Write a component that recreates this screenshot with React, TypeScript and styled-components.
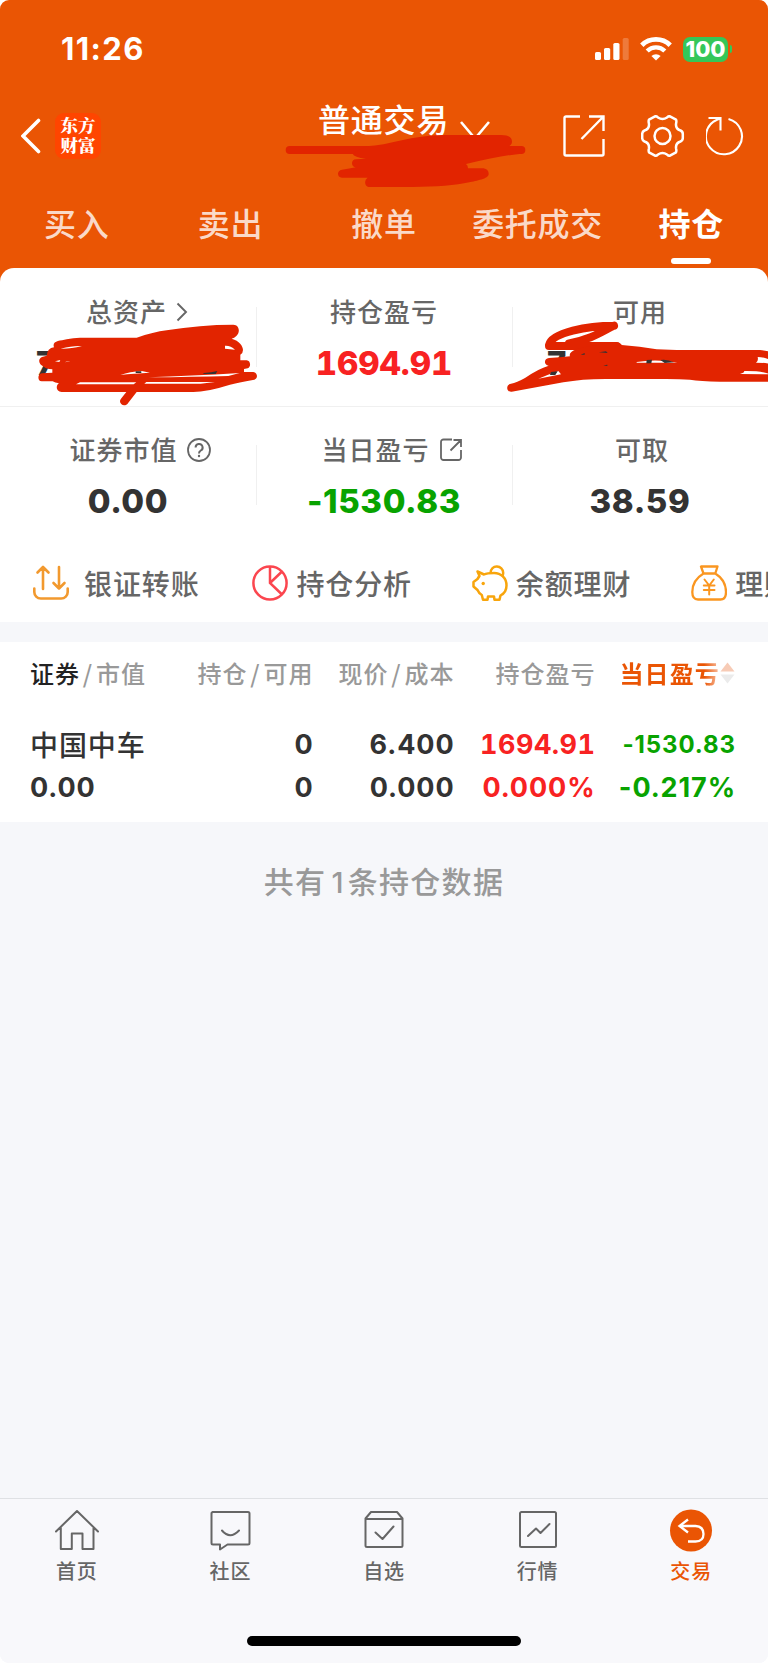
import React from "react";
import styled, { createGlobalStyle } from "styled-components";

const cjk = '"Noto Sans CJK SC", sans-serif';
const num = 'Inter, "Liberation Sans", sans-serif';
const orange = "#ea5504";
const scribbleRed = "#e22400";

const GlobalStyle = createGlobalStyle`
  * { box-sizing: border-box; }
  body { margin: 0; background: #fff; }
`;

const Screen = styled.div`
  position: relative;
  width: 768px;
  height: 1663px;
  display: flex;
  flex-direction: column;
  overflow: hidden;
  border-radius: 9px;
  background: #f6f7fa;
  font-family: ${cjk};
  color: #666;
  white-space: nowrap;
`;

const Header = styled.header`
  height: 282px;
  flex: none;
  background: ${orange};
  color: #fff;
`;

const StatusBar = styled.div`
  display: flex;
  align-items: center;
  justify-content: space-between;
  height: 98px;
  padding: 0 36px 0 61px;
`;

const Clock = styled.span`
  font: 700 31px/36px ${num};
  letter-spacing: 1.4px;
`;

const StatusIcons = styled.div`
  display: flex;
  align-items: center;
  gap: 11px;
`;

const Battery = styled.div`
  display: flex;
  align-items: center;
  gap: 2px;
`;

const BatteryLevel = styled.span`
  width: 45px;
  height: 25px;
  border-radius: 7px;
  background: #34c759;
  font: 800 22px/25px ${num};
  text-align: center;
`;

const BatteryTip = styled.span`
  width: 2px;
  height: 8px;
  border-radius: 0 3px 3px 0;
  background: #34c759;
`;

const NavBar = styled.div`
  display: grid;
  grid-template-columns: 256px 1fr 256px;
  height: 76px;
`;

const NavLeft = styled.div`
  display: flex;
  align-items: center;
  gap: 14px;
  padding-left: 21px;
`;

const Logo = styled.div`
  width: 46px;
  height: 46px;
  padding-top: 2px;
  border-radius: 9px;
  background: #ff4500;
  font: 900 17.5px/20px "Noto Serif CJK SC", ${cjk};
  text-align: center;
`;

const NavTitle = styled.div`
  display: flex;
  align-items: flex-start;
  gap: 11px;
  padding-left: 62px;
  font-size: 32px;
  font-weight: 500;
  line-height: 40px;
  letter-spacing: 0.8px;
  & > svg { margin-top: 23px; }
`;

const NavRight = styled.div`
  display: flex;
  align-items: center;
  padding-left: 51px;
`;

const IconGap = styled.i<{ $w: number }>`
  width: ${(p) => p.$w}px;
`;

const Tabs = styled.nav`
  display: flex;
  height: 108px;
  padding-top: 28px;
`;

const Tab = styled.div<{ $active?: boolean }>`
  flex: 1;
  display: flex;
  flex-direction: column;
  align-items: center;
  gap: 15px;
  font-size: 32px;
  line-height: 41px;
  letter-spacing: 0.7px;
  font-weight: ${(p) => (p.$active ? 700 : 500)};
  color: ${(p) => (p.$active ? "#fff" : "rgba(255,255,255,.8)")};
`;

const TabMarker = styled.span`
  width: 40px;
  height: 6px;
  border-radius: 3px;
  background: #fff;
`;

const Sheet = styled.section`
  flex: none;
  height: 354px;
  margin-top: -14px;
  border-radius: 14px 14px 0 0;
  background: #fff;
`;

const StatRow = styled.div<{ $line?: boolean }>`
  display: flex;
  height: ${(p) => (p.$line ? 139 : 134)}px;
  padding-top: ${(p) => (p.$line ? 25 : 24)}px;
  border-bottom: ${(p) => (p.$line ? "1px solid #f0f0f0" : "none")};
`;

const Stat = styled.div`
  flex: 1;
  display: flex;
  flex-direction: column;
  align-items: center;
`;

const StatDivider = styled.i`
  width: 1px;
  height: 60px;
  margin: 14px -1px 0 0;
  background: #f0f0f0;
`;

const StatLabel = styled.div<{ $indent?: number; $gap?: number }>`
  display: flex;
  align-items: center;
  gap: ${(p) => p.$gap || 9}px;
  height: 36px;
  padding-left: ${(p) => p.$indent || 0}px;
  font-size: 26px;
  font-weight: 500;
  line-height: 36px;
  letter-spacing: 1px;
  & > svg { margin-top: 1px; }
`;

const StatValue = styled.div<{ $color?: string; $tabular?: boolean }>`
  height: 40px;
  margin-top: 14px;
  font: 800 33px/40px ${num};
  font-variant-numeric: ${(p) => (p.$tabular ? "tabular-nums" : "normal")};
  letter-spacing: ${(p) => (p.$tabular ? 0 : 0.6)}px;
  color: ${(p) => p.$color || "#333"};
`;

const HiddenValue = styled(StatValue)<{ $left: number }>`
  align-self: flex-start;
  margin-left: ${(p) => p.$left}px;
`;

const Actions = styled.div`
  display: flex;
  height: 81px;
  padding: 23px 0 0 33px;
  overflow: hidden;
`;

const Action = styled.div<{ $gap: number }>`
  flex: 0 0 219.4px;
  display: flex;
  align-items: center;
  gap: ${(p) => p.$gap}px;
  height: 38px;
  font-size: 28px;
  font-weight: 500;
  line-height: 37px;
  letter-spacing: 0.9px;
  & > svg { flex: none; }
`;

const Holdings = styled.section`
  flex: none;
  height: 180px;
  margin-top: 20px;
  padding: 14px 32px 0 30px;
  background: #fff;
`;

const HoldingsHead = styled.div`
  display: grid;
  grid-template-columns: 142.5px 141px 141px 141px 1fr;
  height: 34px;
  font-size: 24px;
  font-weight: 500;
  line-height: 34px;
  letter-spacing: 1px;
  color: #999;
`;

const HeadCell = styled.div<{ $align?: string }>`
  text-align: ${(p) => p.$align || "right"};
  & > b { font-weight: 500; color: #222; }
  & > span { margin: 0 2.8px; font-weight: 500; }
`;

const SortedCell = styled.div`
  display: flex;
  align-items: center;
  padding-left: 24px;
  & > span {
    letter-spacing: 1.1px;
    font-weight: 700;
    background: linear-gradient(90deg, ${orange} 84%, #f8c3a8 100%);
    background-clip: text;
    -webkit-background-clip: text;
    color: transparent;
  }
`;

const HoldingRow = styled.div<{ $top: number }>`
  display: grid;
  grid-template-columns: 142.5px 141px 141px 141px 1fr;
  height: 34px;
  margin-top: ${(p) => p.$top}px;
  font: 700 27px/34px ${num};
  letter-spacing: 0.9px;
  color: #333;
`;

const Cell = styled.div<{ $color?: string; $size?: number; $tabular?: boolean }>`
  text-align: right;
  color: ${(p) => p.$color || "inherit"};
  font-size: ${(p) => p.$size || 27}px;
  font-variant-numeric: ${(p) => (p.$tabular ? "tabular-nums" : "normal")};
  letter-spacing: ${(p) => (p.$tabular ? "0.5px" : "inherit")};
`;

const NameCell = styled.div`
  margin-top: -1px;
  font: 500 28px/34px ${cjk};
  letter-spacing: 0.9px;
`;

const LeftCell = styled.div`
  text-align: left;
`;

const Summary = styled.p`
  flex: 1;
  margin: 37px 0 0;
  font-size: 30px;
  font-weight: 500;
  line-height: 42px;
  letter-spacing: 1.3px;
  text-align: center;
  color: #999;
  & > span { font: 500 29px/42px ${num}; margin: 0 3px 0 5px; }
`;

const BottomBar = styled.footer`
  flex: none;
  display: flex;
  flex-direction: column;
  align-items: center;
  justify-content: space-between;
  height: 165px;
  padding-bottom: 17px;
  border-top: 1px solid #dfe1e4;
  background: #f8f8fb;
`;

const BottomTabs = styled.div`
  display: flex;
  width: 100%;
`;

const BottomTab = styled.div<{ $active?: boolean }>`
  flex: 1;
  display: flex;
  flex-direction: column;
  align-items: center;
  padding-top: 9.5px;
  font-size: 20px;
  font-weight: 500;
  line-height: 28px;
  letter-spacing: 0.8px;
  color: ${(p) => (p.$active ? orange : "#666")};
  & > svg { margin-bottom: 4.5px; }
`;

const HomeIndicator = styled.div`
  width: 274px;
  height: 10px;
  border-radius: 5px;
  background: #000;
`;

const ScribbleLayer = styled.svg`
  position: absolute;
  top: 0;
  left: 0;
  pointer-events: none;
`;

const Signal = () => (
  <svg width="34" height="24" viewBox="0 0 34 24" fill="#fff">
    <rect x="0" y="15" width="6" height="8" rx="1.6" />
    <rect x="9" y="11" width="6.2" height="12" rx="1.6" />
    <rect x="18.3" y="6" width="6.2" height="17" rx="1.6" />
    <rect x="27.7" y="1" width="6" height="22" rx="1.6" opacity=".22" />
  </svg>
);

const Wifi = () => (
  <svg width="32" height="24" viewBox="0 0 32 24" fill="none" stroke="#fff">
    <path d="M1.8 8.2a20.3 20.3 0 0 1 28.4 0" strokeWidth="4.8" />
    <path d="M7.2 14a12.5 12.5 0 0 1 17.6 0" strokeWidth="4.4" />
    <path d="M16 23.6 11.4 19a6.6 6.6 0 0 1 9.2 0Z" fill="#fff" stroke="none" />
  </svg>
);

const ShareOut = () => (
  <svg width="42" height="42" viewBox="0 0 42 42" fill="none" stroke="#fff" strokeWidth="2.4">
    <path d="M17 1.5H3A1.5 1.5 0 0 0 1.5 3v36A1.5 1.5 0 0 0 3 40.500h36a1.500 1.500 0 0 0 1.500-1.500V24M26 1.500h14.500V16M40 2 18.500 24" />
  </svg>
);

const Gear = () => (
  <svg width="44" height="42" viewBox="0 0 44 42" fill="none" stroke="#fff" strokeWidth="2.500" strokeLinejoin="round">
    <circle cx="21.500" cy="21" r="8" />
    <path d="M14.500 1.200 8 4.700Q7.300 6 7.900 8.500C8.500 12.500 6.500 14.600 3.500 15.500Q1.200 16.500 1.200 19V23Q1.200 25.500 3.500 26.500C6.500 27.400 8.500 29.500 7.900 33.500Q7.300 36 8 37.300L14.500 40.800Q16 40.800 17 39.500Q21.500 36.700 26 39.500Q27 40.800 28.500 40.800L35 37.300Q35.700 36 35.100 33.500C34.500 29.500 36.500 27.400 39.500 26.500Q41.800 25.500 41.800 23V19Q41.800 16.500 39.500 15.500C36.500 14.600 34.500 12.500 35.100 8.500Q35.700 6 35 4.700L28.500 1.200Q27 1.200 26 2.500Q21.500 5.300 17 2.500Q16 1.200 14.500 1.200Z" />
  </svg>
);

const Reload = () => (
  <svg width="40" height="40" viewBox="0 0 40 40" fill="none" stroke="#fff" strokeWidth="2.100">
    <path d="M22.500 2.900A18 18 0 1 1 11 3.700L14.500 2.300M2.500 2H14.500V14.500" />
  </svg>
);

const Transfer = () => (
  <svg width="36" height="36" viewBox="0 0 36 36" fill="none" stroke="#f2992e" strokeWidth="2.600" strokeLinecap="round" strokeLinejoin="round">
    <path d="M1.300 23.500v3.500a6.500 6.500 0 0 0 6.500 6.500h20.400a6.500 6.500 0 0 0 6.500-6.500v-3.500M10 24V2M4.500 7.500 10 2l5.500 5.500M26 2v21.500M20.500 18l5.500 5.500 5.500-5.500" />
  </svg>
);

const Pie = () => (
  <svg width="36" height="36" viewBox="0 0 36 36" fill="none" stroke="#fb464f" strokeWidth="2.500">
    <circle cx="18" cy="18" r="16.600" />
    <path d="M18 1.500V18L30 29.500M18 18 30 6.500" />
  </svg>
);

const Piggy = () => (
  <svg width="36" height="36" viewBox="0 0 36 36" fill="none" stroke="#f8a50c" strokeWidth="2.500" strokeLinejoin="round">
    <path d="M5.500 6.500 12 9.500Q15 8 22 8C29 8 34.500 13 34.500 20.500Q34.500 27.500 28.500 30.500L27.500 34.700H22.500L22 31.500H16L15.500 34.700H11L9.800 30Q7 28.500 5.500 25L1.500 21.500V17L5.500 14Q7 11.500 7.500 11Z" />
    <path d="M18.500 8.500C18.500-1.500 31.500.2 31.200 8Q31.200 10.500 30 11.500" />
    <circle cx="11.200" cy="18.500" r="1.700" fill="#f8a50c" stroke="none" />
  </svg>
);

const MoneyBag = () => (
  <svg width="36" height="36" viewBox="0 0 36 36" fill="none" stroke="#fa9620" strokeWidth="2.300" strokeLinejoin="round" strokeLinecap="round">
    <path d="M10 1.500H26.500L24.300 8.500H12.500ZM12.500 8.500C5 13 1.300 20 1.300 27Q1.300 34.500 7 34.500H29.500Q35 34.500 35 27C35 20 31.500 13 24.300 8.500" />
    <path d="M13.500 14.500 18.200 20.500 22.800 14.500M12.800 20.500H23.500M12.800 25H23.500M18.200 20.500V29.500" strokeWidth="2" />
  </svg>
);

const Question = () => (
  <svg width="24" height="24" viewBox="0 0 24 24" fill="none" stroke="#666" strokeWidth="1.800">
    <circle cx="12" cy="12" r="11" />
    <path d="M8.600 9.500a3.500 3.500 0 1 1 5.200 3q-1.800 1-1.800 3" strokeWidth="2" />
    <circle cx="12" cy="18" r="1.200" fill="#666" stroke="none" />
  </svg>
);

const SmallShare = () => (
  <svg width="22" height="23" viewBox="0 0 22 23" fill="none" stroke="#666" strokeWidth="1.800">
    <path d="M12 1.500H3.500a2.500 2.500 0 0 0-2.500 2.500v15.500a2.500 2.500 0 0 0 2.500 2.500h15a2.500 2.500 0 0 0 2.500-2.500V12M13.500 2H21v7M20.500 2.500 10.500 12.500" />
  </svg>
);

const SortArrows = () => (
  <svg width="15" height="22" viewBox="0 0 15 22">
    <path d="M7.500 .5 14.500 9.500H.5Z" fill="#f7cbb6" />
    <path d="M7.500 21.500 14.500 12.500H.5Z" fill="#ebebeb" />
  </svg>
);

const NavIcon = ({ children }: { children: React.ReactNode }) => (
  <svg width="44" height="44" viewBox="0 0 44 44" fill="none" stroke="#666" strokeWidth="2" strokeLinejoin="round" strokeLinecap="round">
    {children}
  </svg>
);

const Scribbles = () => (
  <ScribbleLayer width="768" height="420" viewBox="0 0 768 420" fill={scribbleRed}>
    <g transform="translate(256 80) scale(.33333)">
      <path d="M101 210H796" stroke={scribbleRed} strokeWidth="24" strokeLinecap="round" />
      <path d="M330 199C400 196 470 165 560 165H735C758 165 768 173 768 185Q768 194 756 200L797 221Q740 226 630 252Q636 256 636 265H678C692 265 698 272 698 282C698 297 660 302 640 307C600 316 540 321 470 321H342C324 321 324 300 335 293H258C242 293 242 270 258 269Q280 266 300 262C284 262 284 238 300 238L330 236Q294 232 290 221Z" />
    </g>
    <g transform="translate(0 260) scale(.33333)">
      <path d="M162 262C155 242 180 243 200 238Q220 233 240 233H410Q460 216 500 211Q600 194 700 194C719 194 721 219 709 228Q703 234 695 236C718 242 729 258 729 270Q729 280 721 284V301H740C752 302 754 320 743 325L732 327V336H760C774 338 774 356 763 359Q720 366 690 374Q620 396 580 396H410L385 428C374 446 352 430 363 416L379 396H185C170 396 165 378 177 370Q165 368 158 364H125C112 364 112 341 125 340L157 338V328Q137 326 132 320C115 313 113 297 126 291L140 287Q142 264 162 262Z" />
      <path
        fill="#fff"
        d="M182 266Q220 256 246 258Q210 267 182 266ZM675 257Q692 256 705 269L675 266ZM165 304L181 300L178 306ZM194 307Q203 302 211 304ZM361 345Q390 334 425 333L450 338Q400 340 361 345ZM446 352Q570 348 719 339L685 348Q580 351 446 352ZM228 373L240 367H409L401 373ZM439 366H645L602 371H433Z"
      />
      <path d="M407 334H424V339H407ZM612 339Q635 337 652 333L647 342H609Z" fill="#333" />
    </g>
    <g transform="translate(490 280) scale(.33333)">
      <path d="M372 137C295 137 185 157 177 195L177 198H380M372 137C338 153 305 178 237 190" fill="none" stroke={scribbleRed} strokeWidth="24" strokeLinecap="round" strokeLinejoin="round" />
      <path d="M245 215Q260 202 380 187Q393 190 395 195Q450 199 500 208L560 210H810Q834 212 850 218V305H690Q630 304 600 299Q560 296 500 297H360Q280 296 220 307L65 335C48 337 47 313 63 311Q80 308 105 294Q145 266 176 257C160 255 162 235 177 234Q210 232 240 229Q237 221 245 215Z" />
      <path
        fill="#fff"
        d="M145 296Q170 286 205 273L213 283Q180 290 145 296ZM803 231Q822 231 840 240V252Q825 248 798 248Q806 242 803 231ZM750 282Q766 277 762 273Q815 272 840 283ZM440 246Q500 236 562 248H440Z"
      />
      <path d="M183 276L203 274L196 285H180ZM470 240L486 239L484 250H469ZM511 240Q530 236 552 247L524 249ZM327 217L348 214L353 219ZM272 224L284 219V224ZM340 256L352 254V258Z" fill="#333" />
    </g>
  </ScribbleLayer>
);

export default function App() {
  return (
    <Screen>
      <GlobalStyle />
      <Header>
        <StatusBar>
          <Clock>11:26</Clock>
          <StatusIcons>
            <Signal />
            <Wifi />
            <Battery>
              <BatteryLevel>100</BatteryLevel>
              <BatteryTip />
            </Battery>
          </StatusIcons>
        </StatusBar>
        <NavBar>
          <NavLeft>
            <svg width="20" height="36" viewBox="0 0 20 36" fill="none" stroke="#fff" strokeWidth="3.600" strokeLinecap="round">
              <path d="M17.500 2.500 2 18 17.500 33.500" />
            </svg>
            <Logo>
              东方
              <br />
              财富
            </Logo>
          </NavLeft>
          <NavTitle>
            普通交易
            <svg width="30" height="17" viewBox="0 0 30 17" fill="none" stroke="#fff" strokeWidth="2.600">
              <path d="M1 1 15 17.500 29 1" />
            </svg>
          </NavTitle>
          <NavRight>
            <ShareOut />
            <IconGap $w={36} />
            <Gear />
            <IconGap $w={21} />
            <Reload />
          </NavRight>
        </NavBar>
        <Tabs>
          <Tab>买入</Tab>
          <Tab>卖出</Tab>
          <Tab>撤单</Tab>
          <Tab>委托成交</Tab>
          <Tab $active>
            持仓
            <TabMarker />
          </Tab>
        </Tabs>
      </Header>

      <Sheet>
        <StatRow $line>
          <Stat>
            <StatLabel $indent={18}>
              总资产
              <svg width="12" height="20" viewBox="0 0 12 20" fill="none" stroke="#666" strokeWidth="1.900">
                <path d="M1.500 1.500 10 10 1.500 18.500" />
              </svg>
            </StatLabel>
            <HiddenValue $left={36}>7</HiddenValue>
          </Stat>
          <StatDivider />
          <Stat>
            <StatLabel>持仓盈亏</StatLabel>
            <StatValue $color="#f82222" $tabular>1694.91</StatValue>
          </Stat>
          <StatDivider />
          <Stat>
            <StatLabel>可用</StatLabel>
            <HiddenValue $left={35}>7</HiddenValue>
          </Stat>
        </StatRow>
        <StatRow>
          <Stat>
            <StatLabel $indent={24}>
              证券市值
              <Question />
            </StatLabel>
            <StatValue>0.00</StatValue>
          </Stat>
          <StatDivider />
          <Stat>
            <StatLabel $indent={15} $gap={10}>
              当日盈亏
              <SmallShare />
            </StatLabel>
            <StatValue $color="#08a300">-1530.83</StatValue>
          </Stat>
          <StatDivider />
          <Stat>
            <StatLabel $indent={4}>可取</StatLabel>
            <StatValue>38.59</StatValue>
          </Stat>
        </StatRow>
        <Actions>
          <Action $gap={15}><Transfer />银证转账</Action>
          <Action $gap={8}><Pie />持仓分析</Action>
          <Action $gap={8}><Piggy />余额理财</Action>
          <Action $gap={8}><MoneyBag />理财</Action>
        </Actions>
      </Sheet>

      <Holdings>
        <HoldingsHead>
          <HeadCell $align="left"><b>证券</b><span>/</span>市值</HeadCell>
          <HeadCell>持仓<span>/</span>可用</HeadCell>
          <HeadCell>现价<span>/</span>成本</HeadCell>
          <HeadCell>持仓盈亏</HeadCell>
          <SortedCell><span>当日盈亏</span><SortArrows /></SortedCell>
        </HoldingsHead>
        <HoldingRow $top={38}>
          <NameCell>中国中车</NameCell>
          <Cell>0</Cell>
          <Cell>6.400</Cell>
          <Cell $color="#f82222" $tabular>1694.91</Cell>
          <Cell $color="#08a300" $size={24}>-1530.83</Cell>
        </HoldingRow>
        <HoldingRow $top={9}>
          <LeftCell>0.00</LeftCell>
          <Cell>0</Cell>
          <Cell>0.000</Cell>
          <Cell $color="#f82222">0.000%</Cell>
          <Cell $color="#08a300">-0.217%</Cell>
        </HoldingRow>
      </Holdings>

      <Summary>共有<span>1</span>条持仓数据</Summary>

      <BottomBar>
        <BottomTabs>
          <BottomTab>
            <NavIcon><path d="M1 22.500 22 2 43 22.500M5.800 19V40H16.800V24.500H27.500V40H38.500V19" /></NavIcon>
            首页
          </BottomTab>
          <BottomTab>
            <NavIcon><path d="M4.500 3H40a1.500 1.500 0 0 1 1.500 1.500V34a1.500 1.500 0 0 1-1.500 1.500H19.500L12 40.500V35.500H5A1.500 1.500 0 0 1 3.500 34V4.500A1.500 1.500 0 0 1 5 3M14 21.500q8 9.500 17 0" /></NavIcon>
            社区
          </BottomTab>
          <BottomTab>
            <NavIcon><path d="M9 3H35L40.500 9.500V36.500a1.500 1.500 0 0 1-1.500 1.500H5a1.500 1.500 0 0 1-1.500-1.500V9.500ZM3.500 10H40.500M13.500 23.500 20.500 30 31.500 17.500" /></NavIcon>
            自选
          </BottomTab>
          <BottomTab>
            <NavIcon><path d="M5.500 3H38.500A1.500 1.500 0 0 1 40 4.500V36.500a1.500 1.500 0 0 1-1.500 1.500H5.500A1.500 1.500 0 0 1 4 36.500V4.500A1.500 1.500 0 0 1 5.500 3M12 27 20 19.500 24.500 24 33.500 15" /></NavIcon>
            行情
          </BottomTab>
          <BottomTab $active>
            <svg width="44" height="44" viewBox="0 0 44 44" fill="none" stroke="#fff" strokeWidth="2.300">
              <circle cx="22" cy="21.500" r="21" fill={orange} stroke="none" />
              <path d="M19 10.500 10.500 17 19 23.500M10.500 17H26.500Q34.500 17.500 34.500 25Q34.500 32.300 26.500 32.500H19" />
            </svg>
            交易
          </BottomTab>
        </BottomTabs>
        <HomeIndicator />
      </BottomBar>
      <Scribbles />
    </Screen>
  );
}
